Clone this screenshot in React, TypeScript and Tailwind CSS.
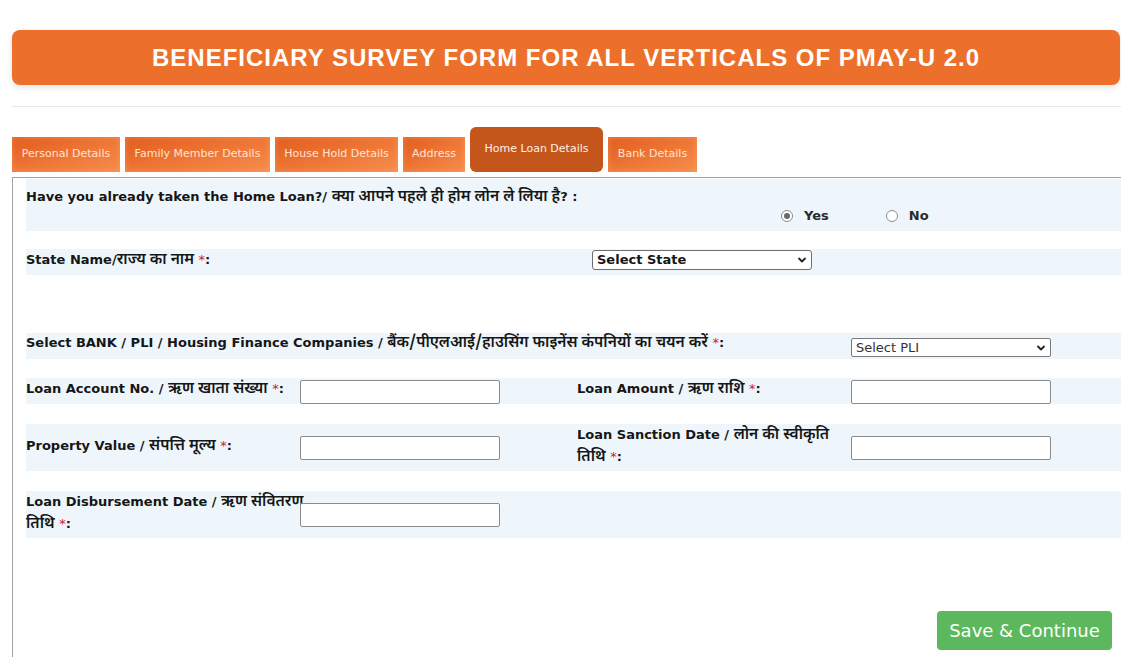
import React from "react";

const LBL = "font-['DejaVu_Sans','Noto_Sans_Devanagari',sans-serif]";

function Star() {
  return <span className="text-[#d0202a] font-normal">*</span>;
}

function H({ children }: { children: React.ReactNode }) {
  return (
    <span className="font-['Noto_Sans_Devanagari','Lohit_Devanagari','Noto_Sans',sans-serif] text-[15.5px] font-semibold">
      {children}
    </span>
  );
}

function Input() {
  return <div className="w-[200px] h-[24px] bg-white border border-[#8a8a8a] rounded-[2px]" />;
}

function Chevron() {
  return (
    <svg width="10" height="10" viewBox="0 0 10 10" className="shrink-0">
      <path d="M2 3.5 L5 6.5 L8 3.5" fill="none" stroke="#222" strokeWidth="1.8" strokeLinecap="round" strokeLinejoin="round" />
    </svg>
  );
}

const tabs = [
  { t: "Personal Details", w: 108 },
  { t: "Family Member Details", w: 145 },
  { t: "House Hold Details", w: 123 },
  { t: "Address", w: 62 },
  { t: "Home Loan Details", w: 133, active: true },
  { t: "Bank Details", w: 89 },
];

export default function App() {
  return (
    <div className={`w-[1121px] h-[657px] overflow-hidden bg-white pl-[12px] text-[#161616] ${LBL}`}>
      {/* Banner */}
      <div className="pt-[30px] pr-[1px]">
        <div className="h-[55px] rounded-[8px] bg-[#ec6f2c] shadow-[0_2px_6px_rgba(0,0,0,0.12)] flex items-center justify-center">
          <span className="font-['Liberation_Sans',Arial,sans-serif] font-bold text-[24px] tracking-[1px] text-white">
            BENEFICIARY SURVEY FORM FOR ALL VERTICALS OF PMAY-U 2.0
          </span>
        </div>
      </div>
      <div className="mt-[21px] border-t border-[#e6e6e6]" />

      {/* Tabs */}
      <div className="mt-[20px] flex items-end gap-[5px] h-[45px]">
        {tabs.map((tab) =>
          tab.active ? (
            <div
              key={tab.t}
              style={{ width: tab.w }}
              className="h-[45px] rounded-[6px] bg-[#c4561b] flex items-center justify-center font-['DejaVu_Sans',Verdana,sans-serif] text-[11px] text-[#fff1e6]"
            >
              {tab.t}
            </div>
          ) : (
            <div
              key={tab.t}
              style={{ width: tab.w }}
              className="h-[35px] bg-gradient-to-br from-[#e05d1c] via-[#ee7534] to-[#f68d4d] shadow-[inset_0_0_6px_rgba(255,170,110,0.5)] flex items-center justify-center font-['DejaVu_Sans',Verdana,sans-serif] text-[11px] text-[#fde4d2]"
            >
              {tab.t}
            </div>
          )
        )}
      </div>

      {/* Content */}
      <div className="mt-[5px] border-t border-l border-[#a3a3a3] h-[480px] pl-[13px] pt-[1px] text-[13px] font-bold leading-[20px]">
        {/* Row 1 */}
        <div className="h-[52px] bg-[#eef6fc] pt-[8px]">
          <div>
            Have you already taken the Home Loan?/ <H>क्या आपने पहले ही होम लोन ले लिया है</H>? :
          </div>
          <div className="flex items-center h-[18px] pl-[755px] font-['DejaVu_Sans',Verdana,sans-serif] font-bold text-[13px] text-[#2a2a2a]">
            <span className="w-[12px] h-[12px] rounded-full border border-[#8d8d8d] bg-white flex items-center justify-center">
              <span className="w-[6px] h-[6px] rounded-full bg-[#6a6a6a]" />
            </span>
            <span className="ml-[11px]">Yes</span>
            <span className="ml-[57px] w-[12px] h-[12px] rounded-full border border-[#8d8d8d] bg-white" />
            <span className="ml-[11px]">No</span>
          </div>
        </div>

        {/* Row 2 */}
        <div className="mt-[18px] h-[26px] bg-[#eef6fc] grid grid-cols-[274px_277px_274px_1fr] items-start">
          <div className="pt-[1px]">
            State Name/<H>राज्य का नाम</H> <Star />:
          </div>
          <div />
          <div className="pl-[15px] pt-[1px]">
            <div className="w-[220px] h-[20px] bg-white border border-[#6e6e6e] rounded-[3px] flex items-center justify-between pl-[4px] pr-[4px] text-[13px] leading-[18px]">
              <span>Select State</span>
              <Chevron />
            </div>
          </div>
          <div />
        </div>

        {/* Row 3 */}
        <div className="mt-[58px] h-[26px] bg-[#eef6fc] grid grid-cols-[274px_277px_274px_1fr] items-start">
          <div className="col-span-3 whitespace-nowrap">
            Select BANK / PLI / Housing Finance Companies / <H>बैंक/पीएलआई/हाउसिंग फाइनेंस कंपनियों का चयन करें</H> <Star />:
          </div>
          <div className="pt-[5px]">
            <div className="w-[200px] h-[19px] bg-white border border-[#7a7a7a] rounded-[2px] flex items-center justify-between pl-[4px] pr-[4px] font-['DejaVu_Sans',Verdana,sans-serif] font-normal text-[13px] text-[#333]">
              <span>Select PLI</span>
              <Chevron />
            </div>
          </div>
        </div>

        {/* Row 4 */}
        <div className="mt-[19px] h-[26px] bg-[#eef6fc] grid grid-cols-[274px_277px_274px_1fr] items-start">
          <div className="pt-[1px]">
            Loan Account No. / <H>ऋण खाता संख्या</H> <Star />:
          </div>
          <div className="pt-[2px]"><Input /></div>
          <div className="pt-[1px]">
            Loan Amount / <H>ऋण राशि</H> <Star />:
          </div>
          <div className="pt-[2px]"><Input /></div>
        </div>

        {/* Row 5 */}
        <div className="mt-[20px] h-[47px] bg-[#eef6fc] grid grid-cols-[274px_277px_274px_1fr] items-center leading-[22px]">
          <div className="pb-[3px]">
            Property Value / <H>संपत्ति मूल्य</H> <Star />:
          </div>
          <div><Input /></div>
          <div className="pr-[8px] pb-[3px]">
            Loan Sanction Date / <H>लोन की स्वीकृति</H>
            <br />
            <H>तिथि</H> <Star />:
          </div>
          <div><Input /></div>
        </div>

        {/* Row 6 */}
        <div className="mt-[20px] h-[47px] bg-[#eef6fc] grid grid-cols-[274px_277px_274px_1fr] items-center leading-[22px]">
          <div className="-mr-[10px] pb-[4px] whitespace-nowrap">
            Loan Disbursement Date / <H>ऋण संवितरण</H>
            <br />
            <H>तिथि</H> <Star />:
          </div>
          <div className="relative"><Input /></div>
          <div />
          <div />
        </div>

        {/* Button */}
        <div className="mt-[73px] flex justify-end pr-[9px]">
          <div className="w-[175px] h-[39px] rounded-[4px] bg-[#5cb85c] flex items-center justify-center font-['DejaVu_Sans',Verdana,sans-serif] font-normal text-[18px] text-white">
            Save &amp; Continue
          </div>
        </div>
      </div>
    </div>
  );
}
